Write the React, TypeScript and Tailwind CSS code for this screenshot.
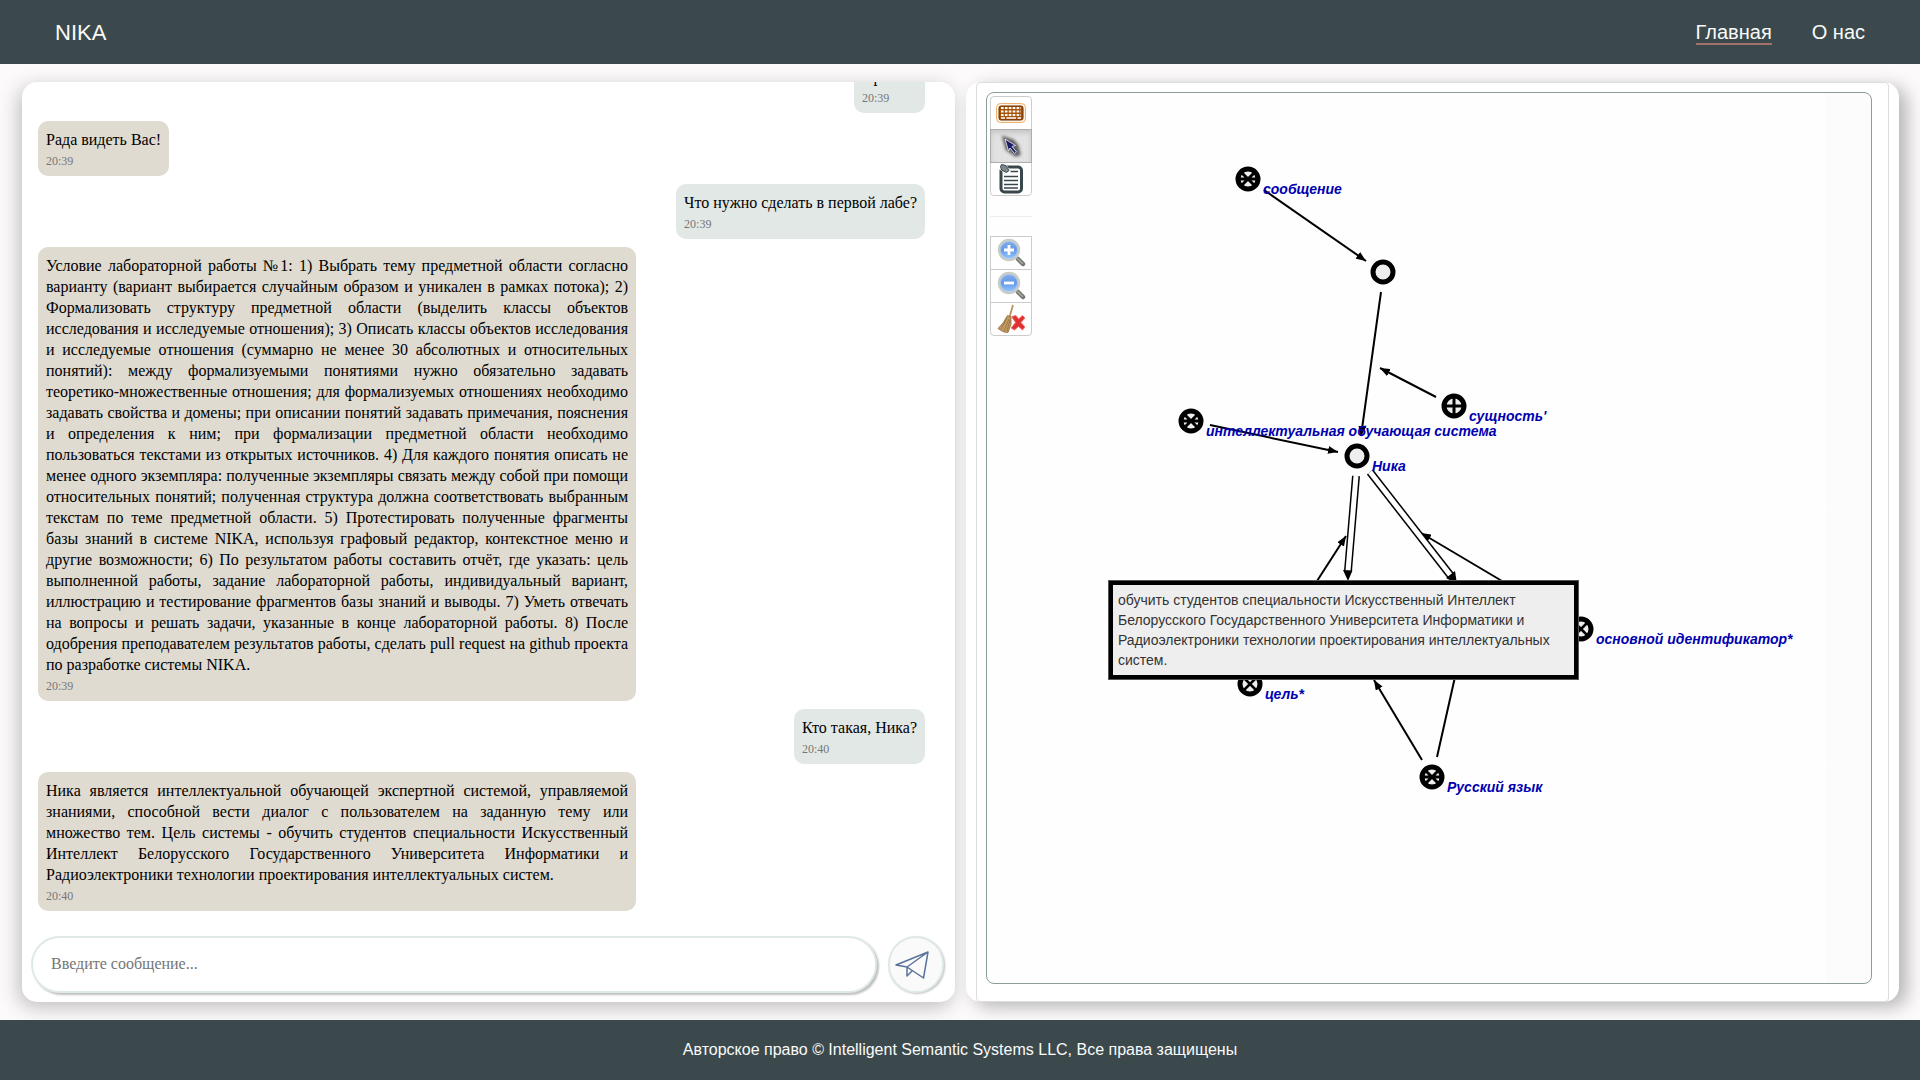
import React from 'react';

type Message = { own: boolean; text: string; time: string };

const messages: Message[] = [
  { own: true, text: 'Привет!', time: '20:39' },
  { own: false, text: 'Рада видеть Вас!', time: '20:39' },
  { own: true, text: 'Что нужно сделать в первой лабе?', time: '20:39' },
  {
    own: false,
    text: 'Условие лабораторной работы №1: 1) Выбрать тему предметной области согласно варианту (вариант выбирается случайным образом и уникален в рамках потока); 2) Формализовать структуру предметной области (выделить классы объектов исследования и исследуемые отношения); 3) Описать классы объектов исследования и исследуемые отношения (суммарно не менее 30 абсолютных и относительных понятий): между формализуемыми понятиями нужно обязательно задавать теоретико-множественные отношения; для формализуемых отношениях необходимо задавать свойства и домены; при описании понятий задавать примечания, пояснения и определения к ним; при формализации предметной области необходимо пользоваться текстами из открытых источников. 4) Для каждого понятия описать не менее одного экземпляра: полученные экземпляры связать между собой при помощи относительных понятий; полученная структура должна соответствовать выбранным текстам по теме предметной области. 5) Протестировать полученные фрагменты базы знаний в системе NIKA, используя графовый редактор, контекстное меню и другие возможности; 6) По результатом работы составить отчёт, где указать: цель выполненной работы, задание лабораторной работы, индивидуальный вариант, иллюстрацию и тестирование фрагментов базы знаний и выводы. 7) Уметь отвечать на вопросы и решать задачи, указанные в конце лабораторной работы. 8) После одобрения преподавателем результатов работы, сделать pull request на github проекта по разработке системы NIKA.',
    time: '20:39',
  },
  { own: true, text: 'Кто такая, Ника?', time: '20:40' },
  {
    own: false,
    text: 'Ника является интеллектуальной обучающей экспертной системой, управляемой знаниями, способной вести диалог с пользователем на заданную тему или множество тем. Цель системы - обучить студентов специальности Искусственный Интеллект Белорусского Государственного Университета Информатики и Радиоэлектроники технологии проектирования интеллектуальных систем.',
    time: '20:40',
  },
];

function Bubble({ own, text, time }: Message) {
  return (
    <div
      className={
        own
          ? 'max-w-[598px] shrink-0 self-end rounded-[10px] bg-[#e2e8e6] px-2 pb-1 pt-2'
          : 'max-w-[598px] shrink-0 self-start rounded-[10px] bg-[#dfdbd0] px-2 pb-1 pt-2'
      }
    >
      <p className="text-justify text-[16px] leading-[21px] text-black">{text}</p>
      <time className="block text-[12px] leading-[22px] text-[#777]">{time}</time>
    </div>
  );
}

function KeyboardIcon() {
  return (
    <svg width="32" height="32" viewBox="0 0 32 32" aria-hidden="true">
      <rect x="1.5" y="6.500" width="29" height="19" rx="4" fill="#fff3e2" stroke="#f0b070" />
      <rect x="4" y="9" width="24" height="14" rx="2" fill="#a85208" stroke="#6b2f04" />
      <path d="M6 11h20M6 14.500h20M6 18h20" stroke="#fff" strokeWidth="2.100" strokeDasharray="2.600 1.300" />
      <path d="M6 21h4M11.500 21h9.500M22.500 21h3.500" stroke="#fff" strokeWidth="1.600" />
    </svg>
  );
}

function CursorIcon() {
  return (
    <svg width="32" height="32" viewBox="0 0 32 32" aria-hidden="true">
      <defs>
        <filter id="cursor-shadow" x="-50%" y="-50%" width="200%" height="200%">
          <feGaussianBlur stdDeviation="1.500" />
        </filter>
      </defs>
      <path d="M9 8l9 3 4 5 2 8-3 1-9-6z" fill="#333" stroke="#333" strokeWidth="3" opacity="0.75" filter="url(#cursor-shadow)" />
      <path d="M10 9l10.500 6.500-3.500 1 4.500 5.500-2 1.500-4.500-5.500-1.500 3z" fill="#1a1d66" stroke="#e4e4ea" strokeWidth="0.900" />
    </svg>
  );
}

function ListIcon() {
  return (
    <svg width="32" height="32" viewBox="0 0 32 32" fill="none" aria-hidden="true">
      <rect x="6" y="4" width="20.500" height="25" rx="3.500" stroke="#37474c" strokeWidth="3" />
      <path d="M9 9.500h4M9 13.500h14M9 17.500h14M9 21.500h14M9 25h14M15 8.500h8" stroke="#37474c" strokeWidth="1.400" />
      <path d="M3 1l8 0 5 8-4 3-8-6z" fill="#fff" />
      <path d="M6.500 1.500l4.500 1 3 5-2.500 2-5-2.500-1-3.500z" fill="#7d8689" stroke="#37474c" />
    </svg>
  );
}

function MagnifierIcon({ plus }: { plus: boolean }) {
  const id = plus ? 'lens-in' : 'lens-out';
  return (
    <svg width="32" height="32" viewBox="0 0 32 32" aria-hidden="true">
      <defs>
        <linearGradient id={id} x1="0" y1="0" x2="0" y2="1">
          <stop offset="0" stopColor="#86aee8" />
          <stop offset="0.500" stopColor="#6499e8" />
          <stop offset="1" stopColor="#9accff" />
        </linearGradient>
      </defs>
      <path d="M23 22l5 5" stroke="#70756e" strokeWidth="4.500" strokeLinecap="round" />
      <path d="M22.500 21.500l5 5" stroke="#a9ada6" strokeWidth="1.500" strokeLinecap="round" />
      <circle cx="14" cy="13" r="10" fill={'url(#' + id + ')'} stroke="#c8cbc6" strokeWidth="2.400" />
      <circle cx="14" cy="13" r="8.500" fill="none" stroke="#b6d2f7" strokeWidth="0.700" />
      <path d={plus ? 'M9 13h10M14 8v10' : 'M9 13h10'} stroke="#fff" strokeWidth="2.800" />
    </svg>
  );
}

function BroomIcon() {
  return (
    <svg width="32" height="32" viewBox="0 0 32 32" aria-hidden="true">
      <path d="M18 2l-3.500 12" stroke="#b8935f" strokeWidth="1.800" />
      <path d="M12.500 12.500l3.500 1.500 0 7-3 8.500-4-.5-3-1.500-3-2 5-5.500z" fill="#c49a62" stroke="#8a6639" strokeWidth="0.800" />
      <path d="M12 15l-6 11M14 16l-5 12M15 17l-3 11" stroke="#92703f" strokeWidth="0.800" />
      <path d="M16.500 13.500l4.500-1 2.500 3.500 4-3.500 2.500 2.500-4 4.500 4 4.500-2.500 3-4-3.500-4 3.500-3.500-2 4.500-5.500z" fill="#e03030" stroke="#ef7b75" strokeWidth="1" />
    </svg>
  );
}

function PlaneIcon() {
  return (
    <svg width="34" height="28" viewBox="0 0 34 28" fill="none" stroke="#5b739c" strokeWidth="1.500" strokeLinejoin="round" aria-hidden="true">
      <path d="M1 14L33 1 28.500 27 12 16zM12 16L33 1M12 16v9l5-5" />
    </svg>
  );
}

const toolButton = 'flex h-[34px] items-center justify-center border border-[#ccc] bg-white';

function Toolbar() {
  return (
    <div className="absolute left-[3px] top-[3px] flex w-[42px] flex-col">
      <button type="button" aria-label="Клавиатура" className={toolButton + ' rounded-t-[4px]'}><KeyboardIcon /></button>
      <button
        type="button"
        aria-label="Выбор"
        className="relative -my-px flex h-[34px] items-center justify-center border border-[#adadad] bg-[#e2e2e2] shadow-[inset_0_3px_5px_rgba(0,0,0,0.125)]"
      >
        <CursorIcon />
      </button>
      <button type="button" aria-label="Содержимое" className={toolButton + ' rounded-b-[4px]'}><ListIcon /></button>
      <hr className="mb-[19px] mt-5 border-[#eee]" />
      <button type="button" aria-label="Увеличить" className={toolButton}><MagnifierIcon plus /></button>
      <button type="button" aria-label="Уменьшить" className={toolButton + ' -mt-px'}><MagnifierIcon plus={false} /></button>
      <button type="button" aria-label="Очистить" className={toolButton + ' -mt-px rounded-b-[4px]'}><BroomIcon /></button>
    </div>
  );
}

type NodeKind = 'plain' | 'plus' | 'cross' | 'star';
type GraphNode = { x: number; y: number; kind: NodeKind; label?: string };

const nodes: GraphNode[] = [
  { x: 261, y: 86, kind: 'star', label: 'сообщение' },
  { x: 396, y: 179, kind: 'plain' },
  { x: 467, y: 313, kind: 'plus', label: "сущность'" },
  { x: 204, y: 328, kind: 'star', label: 'интеллектуальная обучающая система' },
  { x: 370, y: 363, kind: 'plain', label: 'Ника' },
  { x: 594, y: 536, kind: 'cross', label: 'основной идентификатор*' },
  { x: 263, y: 591, kind: 'cross', label: 'цель*' },
  { x: 445, y: 684, kind: 'star', label: 'Русский язык' },
];

const glyphs: Record<NodeKind, string> = {
  plain: '',
  plus: 'M-10 0h20M0-10v20',
  cross: 'M-7-7l14 14M7-7l-14 14',
  star: 'M-7-7l14 14M7-7l-14 14M-10 0h20',
};

const arcs: [number, number, number, number][] = [
  [277, 97, 379, 168],
  [394, 199, 374, 343],
  [449, 304, 393, 275],
  [223, 332, 351, 359],
  [330, 488, 359, 443],
  [515, 488, 434, 440],
  [435, 667, 387, 587],
];

const doubleArcs = ['M369 383L361 478', 'M383 379L464 483'];

function Graph() {
  return (
    <svg className="absolute inset-0 h-full w-full" aria-label="Семантическая сеть">
      <defs>
        <marker id="tip" markerUnits="userSpaceOnUse" markerWidth="10" markerHeight="8" refX="10" refY="4" orient="auto">
          <path d="M0 0L10 4L0 8z" />
        </marker>
      </defs>
      {arcs.map(([x1, y1, x2, y2]) => (
        <line key={x1} x1={x1} y1={y1} x2={x2} y2={y2} stroke="#000" strokeWidth="2" markerEnd="url(#tip)" />
      ))}
      <line x1="450" y1="664" x2="470" y2="575" stroke="#000" strokeWidth="2" />
      {doubleArcs.map((d) => (
        <g key={d}>
          <path d={d} stroke="#000" strokeWidth="8" />
          <path d={d} stroke="#fff" strokeWidth="5" />
        </g>
      ))}
      <path d="M356 477l9.500 .5L361 488zM459 485l9-7 2 13z" />
      {nodes.map(({ x, y, kind, label }) => (
        <g key={x} transform={'translate(' + x + ' ' + y + ')'}>
          <circle r="10" fill="#eee" stroke="#000" strokeWidth="5" />
          <path d={glyphs[kind]} stroke="#000" strokeWidth={kind === 'cross' ? 2.5 : 3} />
          {label && (
            <text x="15" y="15" fill="#0000b0" className="font-['Liberation_Sans',sans-serif] text-[14px] font-bold italic">{label}</text>
          )}
        </g>
      ))}
    </svg>
  );
}

export default function App() {
  return (
    <div className="flex h-screen flex-col overflow-hidden bg-[#fcfafb] font-['Liberation_Sans',Arial,sans-serif]">
      <header className="relative z-10 flex h-16 shrink-0 items-center justify-between bg-[#3b494d] px-[55px] text-[#fafafa]">
        <a href="#home" className="pt-0.5 text-[22px] leading-[24px]">NIKA</a>
        <nav className="flex gap-10 text-[20px] leading-[22px]">
          <a href="#main" className="border-b-2 border-[#a5706a] pt-0.5">Главная</a>
          <a href="#about" className="border-b-2 border-transparent pt-0.5">О нас</a>
        </nav>
      </header>

      <main className="grid min-h-0 flex-1 grid-cols-2 grid-rows-1 gap-[11px] py-[18px] pl-[22px] pr-[21px]">
        <section className="flex min-h-0 min-w-0 flex-col overflow-hidden rounded-[15px] bg-white font-['Liberation_Serif',serif] shadow-[-3px_5px_20px_rgba(0,0,0,0.25)]">
          <div className="flex min-h-0 flex-1 flex-col justify-end gap-2 overflow-hidden pb-[25px] pl-4 pr-[30px]">
            {messages.map((message) => (
              <Bubble key={message.text} {...message} />
            ))}
          </div>
          <form className="mb-[9px] flex shrink-0 gap-[11px] pl-[9px] pr-[11px]" onSubmit={(event) => event.preventDefault()}>
            <input
              type="text"
              aria-label="Сообщение"
              placeholder="Введите сообщение..."
              className="h-[57px] min-w-0 flex-1 rounded-full border-2 border-[#dfe9e8] bg-white px-[18px] pb-0.5 text-[16px] shadow-[2px_2px_2px_rgba(0,0,0,0.25)] outline-none placeholder:text-[#757575]"
            />
            <button
              type="submit"
              aria-label="Отправить"
              className="flex h-[57px] w-[56px] items-center justify-center rounded-full border-2 border-[#dfe9e8] bg-[#fafafa] pr-2 shadow-[1px_1px_2px_rgba(0,0,0,0.25)]"
            >
              <PlaneIcon />
            </button>
          </form>
        </section>

        <section className="flex min-h-0 min-w-0 rounded-[15px] bg-white px-[10px] shadow-[8px_5px_18px_rgba(0,0,0,0.28)]">
          <div className="flex flex-1 rounded-[4px] border border-[#ddd] pb-[17px] pl-[9px] pr-4 pt-[9px]">
            <div className="relative flex-1 overflow-hidden rounded-[8px] border border-[#8b9e95] bg-linear-to-l from-[#fcfcfc] from-[45px] to-[#fefefe] to-[45px]">
              <Graph />
              <div className="absolute left-[121px] top-[487px] w-[471px] border-[5px] border-black bg-[#eee] p-[5px] text-[14px] leading-5 text-[#333] outline-1 -outline-offset-1 outline-[#555]">
                обучить студентов специальности Искусственный Интеллект Белорусского Государственного Университета Информатики и Радиоэлектроники технологии проектирования интеллектуальных систем.
              </div>
              <Toolbar />
            </div>
          </div>
        </section>
      </main>

      <footer className="relative z-10 flex h-[60px] shrink-0 items-center justify-center bg-[#3b494d] text-[16px] text-[#fafafa]">
        Авторское право © Intelligent Semantic Systems LLC, Все права защищены
      </footer>
    </div>
  );
}
